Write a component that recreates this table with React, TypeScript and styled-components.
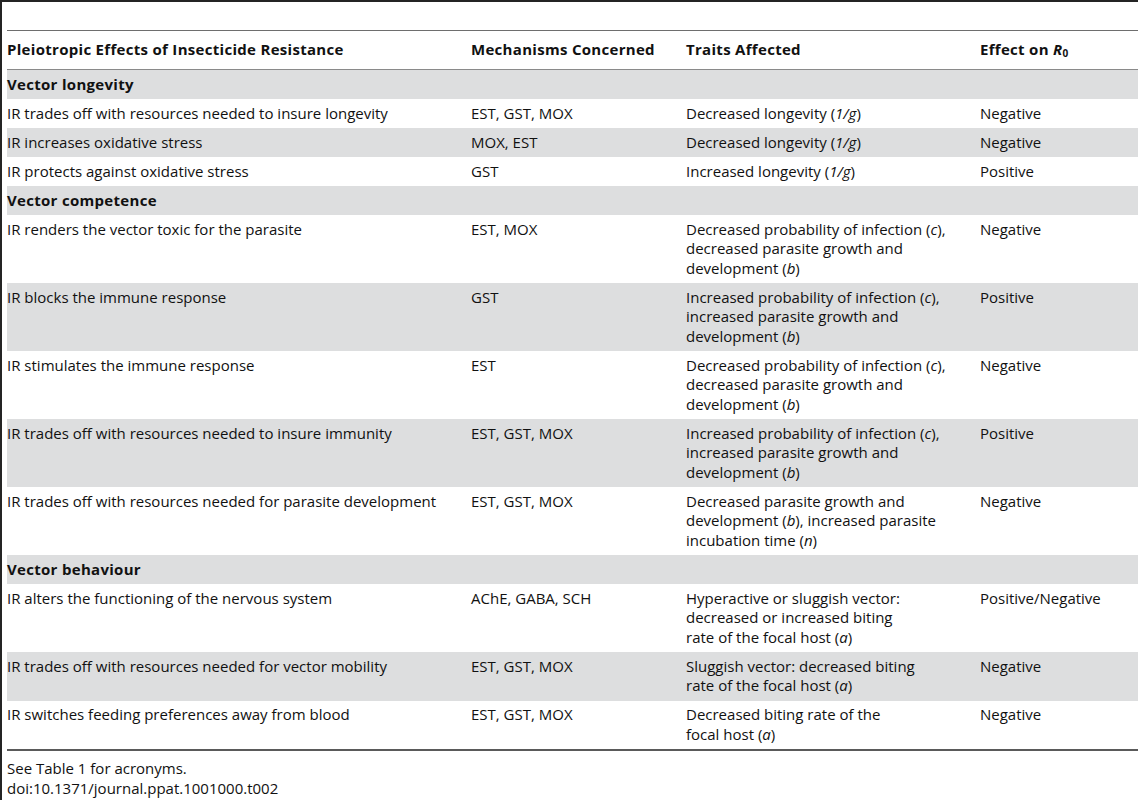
import React from "react";
import styled, { createGlobalStyle } from "styled-components";

const GlobalStyle = createGlobalStyle`
  html, body { margin: 0; padding: 0; background: #ffffff; }
  body { font-family: "Open Sans", "Noto Sans", sans-serif; color: #111111; }
`;

const Page = styled.div`
  box-sizing: border-box;
  min-height: 800px;
  border-left: 2px solid #242424;
  border-top: 2px solid #242424;
  padding: 28px 0 0 5px;
`;

const Table = styled.table`
  width: 100%;
  border-collapse: collapse;
  font-size: 15px;
  line-height: 19.5px;
  border-top: 1px solid #6e6e6e;
  border-bottom: 2px solid #5a5a5a;
`;

const HeadCell = styled.th`
  text-align: left;
  font-weight: 700;
  letter-spacing: 0.3px;
  height: 38px;
  padding: 0;
  vertical-align: middle;
  border-bottom: 1px solid #8a8a8a;
  white-space: nowrap;
`;

const Row = styled.tr<{ $shaded: boolean }>`
  background: ${(p) => (p.$shaded ? "#dddedf" : "#ffffff")};
`;

const Cell = styled.td`
  padding: 4.75px 0;
  vertical-align: top;
  white-space: nowrap;
`;

const SectionCell = styled.td`
  padding: 4.75px 0;
  font-weight: 700;
  letter-spacing: 0.3px;
`;

const Sub = styled.sub`
  font-size: 10px;
  font-style: normal;
  vertical-align: -2px;
  line-height: 0;
`;

const Footer = styled.div`
  font-size: 15px;
  line-height: 19.5px;
  padding-top: 8px;
`;

type Item = { effect: string; mech: string; traits: React.ReactNode; r0: string };
type Section = { title: string; items: Item[] };

const sections: Section[] = [
  {
    title: "Vector longevity",
    items: [
      { effect: "IR trades off with resources needed to insure longevity", mech: "EST, GST, MOX", traits: <>Decreased longevity (<i>1/g</i>)</>, r0: "Negative" },
      { effect: "IR increases oxidative stress", mech: "MOX, EST", traits: <>Decreased longevity (<i>1/g</i>)</>, r0: "Negative" },
      { effect: "IR protects against oxidative stress", mech: "GST", traits: <>Increased longevity (<i>1/g</i>)</>, r0: "Positive" },
    ],
  },
  {
    title: "Vector competence",
    items: [
      { effect: "IR renders the vector toxic for the parasite", mech: "EST, MOX", traits: <>Decreased probability of infection (<i>c</i>),<br />decreased parasite growth and<br />development (<i>b</i>)</>, r0: "Negative" },
      { effect: "IR blocks the immune response", mech: "GST", traits: <>Increased probability of infection (<i>c</i>),<br />increased parasite growth and<br />development (<i>b</i>)</>, r0: "Positive" },
      { effect: "IR stimulates the immune response", mech: "EST", traits: <>Decreased probability of infection (<i>c</i>),<br />decreased parasite growth and<br />development (<i>b</i>)</>, r0: "Negative" },
      { effect: "IR trades off with resources needed to insure immunity", mech: "EST, GST, MOX", traits: <>Increased probability of infection (<i>c</i>),<br />increased parasite growth and<br />development (<i>b</i>)</>, r0: "Positive" },
      { effect: "IR trades off with resources needed for parasite development", mech: "EST, GST, MOX", traits: <>Decreased parasite growth and<br />development (<i>b</i>), increased parasite<br />incubation time (<i>n</i>)</>, r0: "Negative" },
    ],
  },
  {
    title: "Vector behaviour",
    items: [
      { effect: "IR alters the functioning of the nervous system", mech: "AChE, GABA, SCH", traits: <>Hyperactive or sluggish vector:<br />decreased or increased biting<br />rate of the focal host (<i>a</i>)</>, r0: "Positive/Negative" },
      { effect: "IR trades off with resources needed for vector mobility", mech: "EST, GST, MOX", traits: <>Sluggish vector: decreased biting<br />rate of the focal host (<i>a</i>)</>, r0: "Negative" },
      { effect: "IR switches feeding preferences away from blood", mech: "EST, GST, MOX", traits: <>Decreased biting rate of the<br />focal host (<i>a</i>)</>, r0: "Negative" },
    ],
  },
];

export default function App() {
  return (
    <>
      <GlobalStyle />
      <Page>
        <Table>
          <colgroup>
            <col style={{ width: 464 }} />
            <col style={{ width: 215 }} />
            <col style={{ width: 294 }} />
            <col />
          </colgroup>
          <thead>
            <tr>
              <HeadCell>Pleiotropic Effects of Insecticide Resistance</HeadCell>
              <HeadCell>Mechanisms Concerned</HeadCell>
              <HeadCell>Traits Affected</HeadCell>
              <HeadCell>
                Effect on <i>R</i>
                <Sub>0</Sub>
              </HeadCell>
            </tr>
          </thead>
          <tbody>
            {sections.map((s) => {
              const rows: React.ReactNode[] = [
                <Row key={s.title} $shaded={true}>
                  <SectionCell colSpan={4}>{s.title}</SectionCell>
                </Row>,
              ];
              s.items.forEach((it, i) => {
                rows.push(
                  <Row key={it.effect} $shaded={i % 2 === 1}>
                    <Cell>{it.effect}</Cell>
                    <Cell>{it.mech}</Cell>
                    <Cell>{it.traits}</Cell>
                    <Cell>{it.r0}</Cell>
                  </Row>
                );
              });
              return rows;
            })}
          </tbody>
        </Table>
        <Footer>
          See Table 1 for acronyms.
          <br />
          doi:10.1371/journal.ppat.1001000.t002
        </Footer>
      </Page>
    </>
  );
}
